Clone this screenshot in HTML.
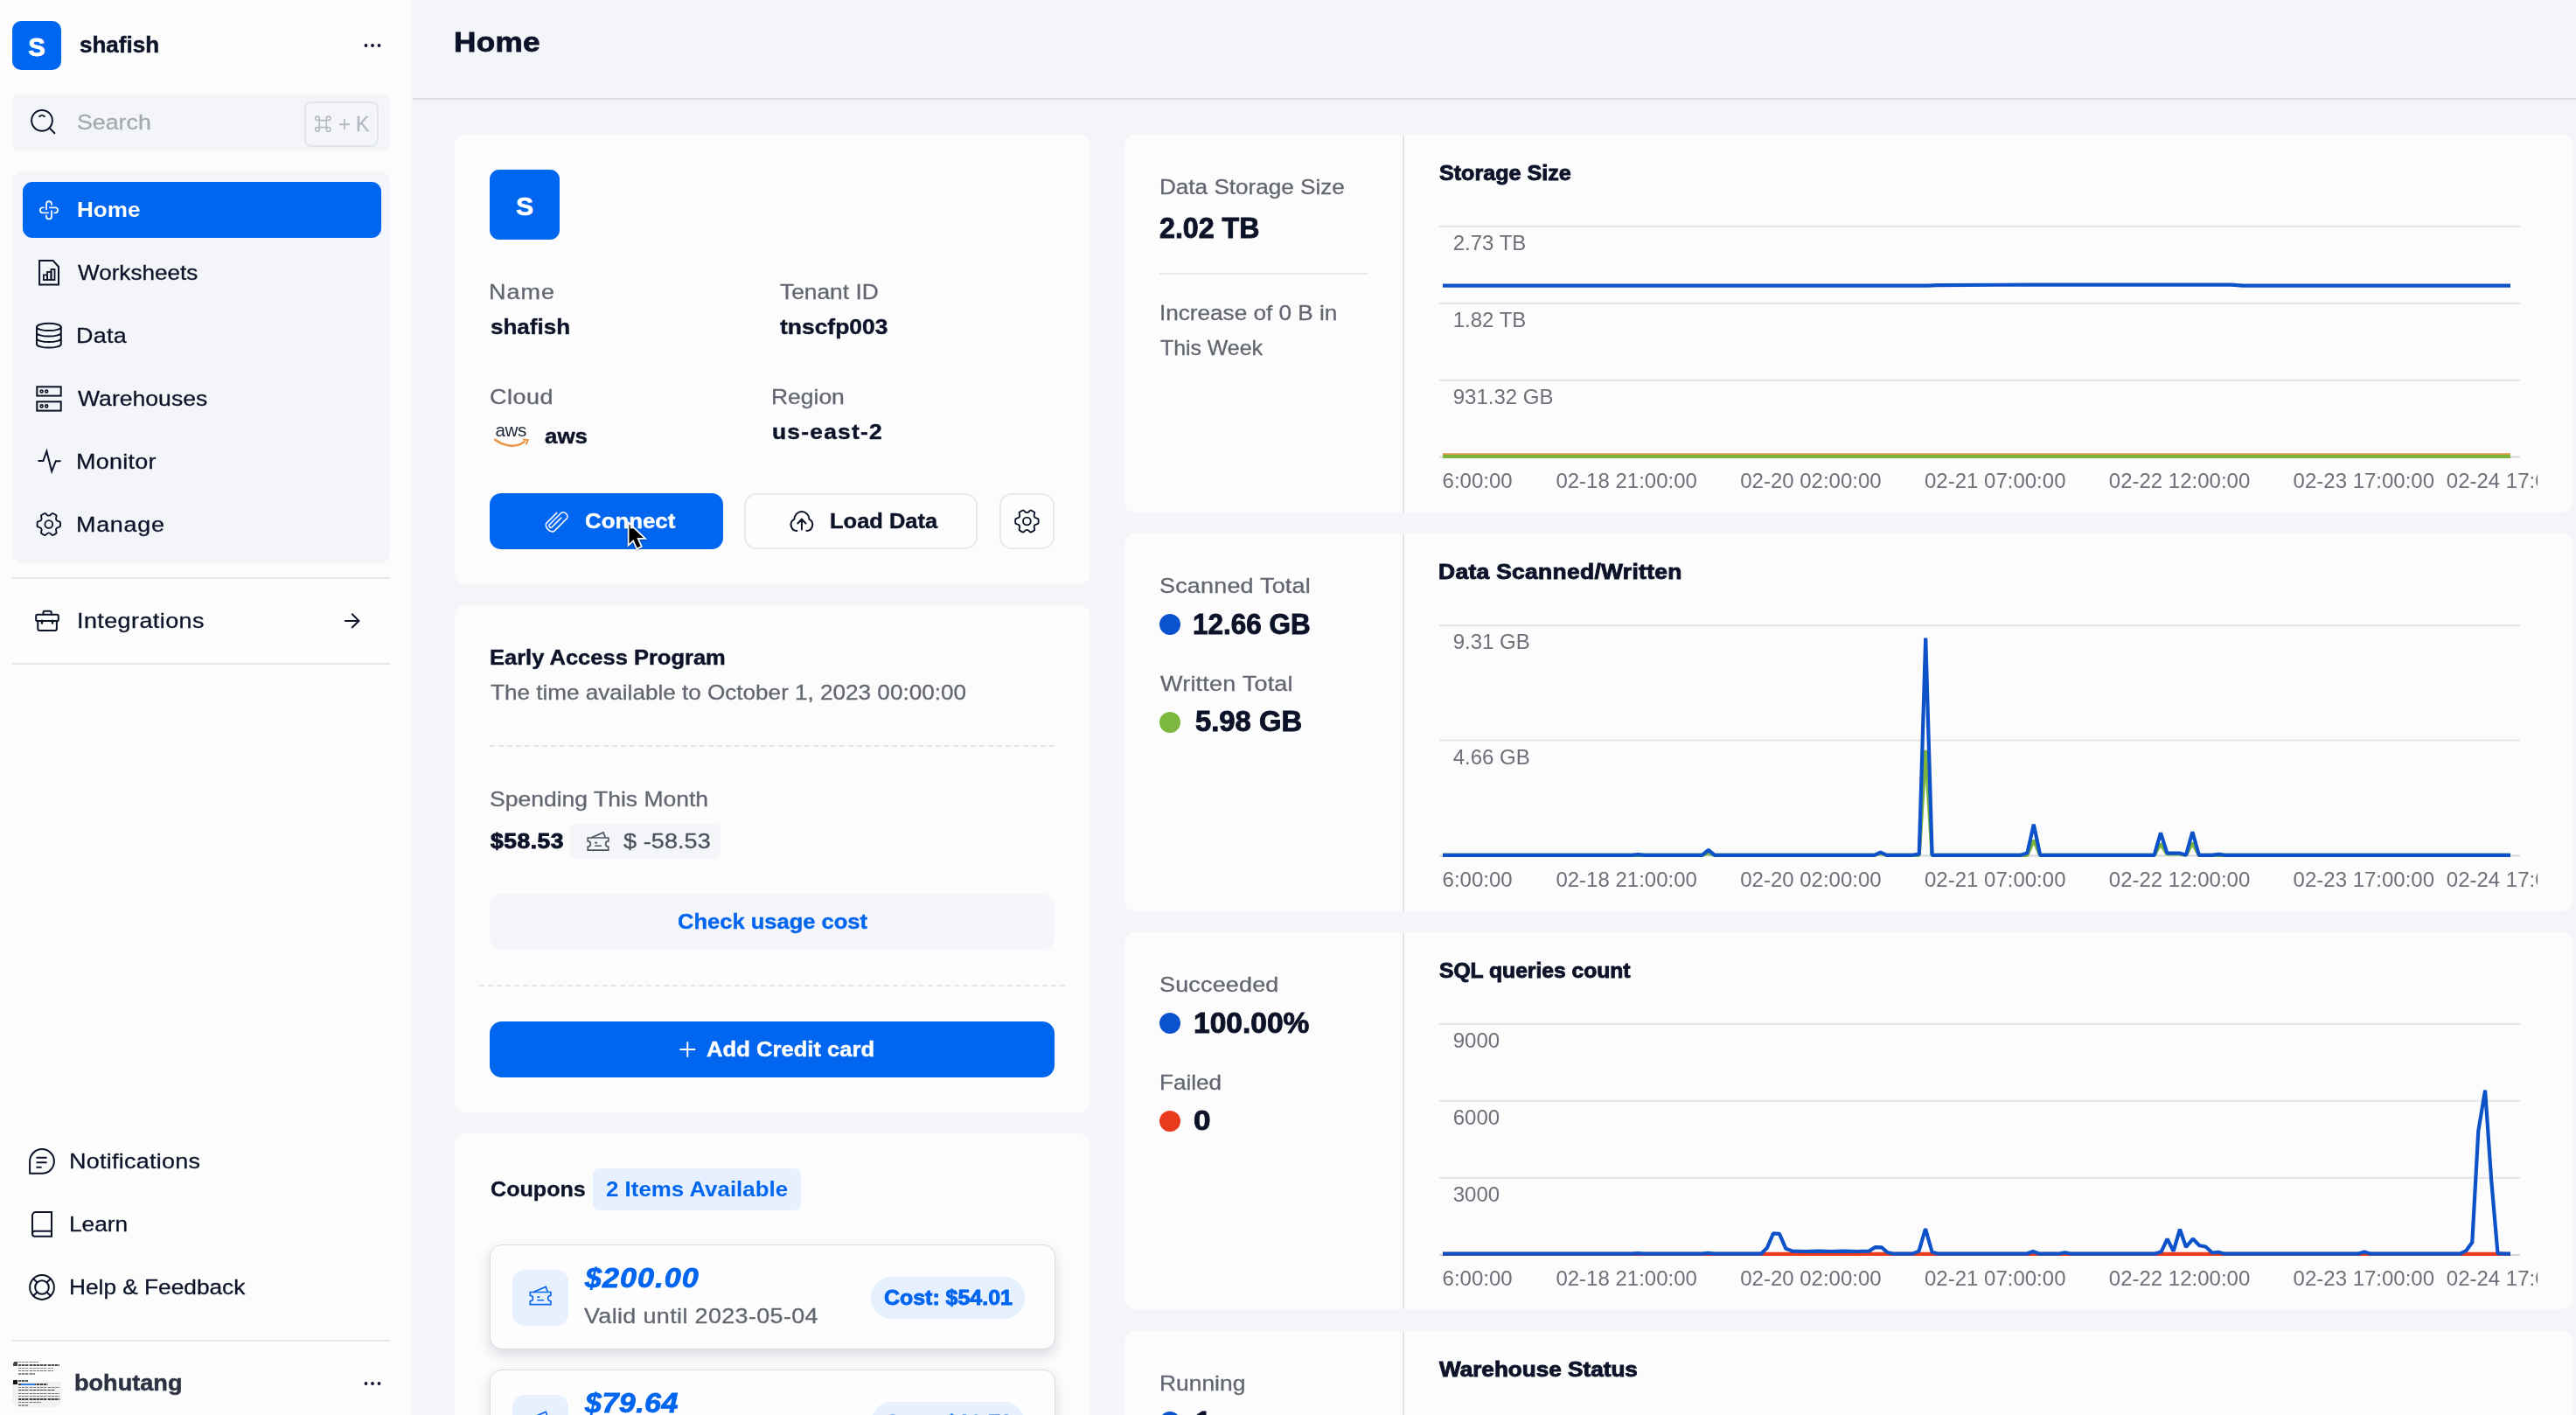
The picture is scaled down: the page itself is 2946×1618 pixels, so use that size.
<!DOCTYPE html>
<html><head><meta charset="utf-8"><title>Home</title>
<style>
html,body{margin:0;padding:0;}
body{width:2946px;height:1618px;overflow:hidden;position:relative;background:#f3f5f9;font-family:"Liberation Sans",sans-serif;}
.a{position:absolute;}
.t{position:absolute;white-space:pre;transform-origin:0 0;}
.card{position:absolute;background:#fcfcfd;border-radius:12px;}
.blue{background:#0065ef;}
svg{position:absolute;overflow:visible;}
</style></head><body>
<!-- sidebar -->
<div class="a" style="left:0;top:0;width:470px;height:1618px;background:#fcfcfd"></div>
<div class="a blue" style="left:14px;top:24px;width:56px;height:56px;border-radius:10px"></div>
<div class="t" style="left:14px;top:24px;width:56px;height:56px;line-height:61px;text-align:center;color:#fff;font-weight:700;font-size:29px;-webkit-text-stroke:0.8px #fff">S</div>
<div class="a" style="left:14px;top:108px;width:432px;height:64px;border-radius:8px;background:#f3f5f9"></div>
<div class="a" style="left:348px;top:115.5px;width:85.3px;height:52px;border-radius:8px;border:2px solid #e3e6ea;box-sizing:border-box"></div>
<div class="a" style="left:14px;top:196px;width:432px;height:448px;border-radius:12px;background:#f3f5f9"></div>
<div class="a blue" style="left:26px;top:208px;width:410px;height:64px;border-radius:11px"></div>
<div class="a" style="left:14px;top:660px;width:432px;height:2px;background:#e6e7eb"></div>
<div class="a" style="left:14px;top:758px;width:432px;height:2px;background:#e6e7eb"></div>
<div class="a" style="left:14px;top:1532px;width:432px;height:2px;background:#e6e7eb"></div>
<!-- header -->
<div class="a" style="left:472px;top:112px;width:2474px;height:2px;background:#dadde2"></div>
<!-- cards left -->
<div class="card" style="left:520px;top:154px;width:726px;height:514px"></div>
<div class="a blue" style="left:560px;top:194px;width:80px;height:80px;border-radius:11px"></div>
<div class="t" style="left:560px;top:194px;width:80px;height:80px;line-height:83px;text-align:center;color:#fff;font-weight:700;font-size:30px;-webkit-text-stroke:0.6px #fff">S</div>
<div class="a blue" style="left:560px;top:564px;width:267px;height:64px;border-radius:13px"></div>
<div class="a" style="left:851.3px;top:564px;width:266.5px;height:64px;border-radius:14px;border:2px solid #e7e9ec;box-sizing:border-box;background:#fdfdfe"></div>
<div class="a" style="left:1142.6px;top:564px;width:63.5px;height:64px;border-radius:14px;border:2px solid #e7e9ec;box-sizing:border-box;background:#fdfdfe"></div>

<div class="card" style="left:520px;top:692px;width:726px;height:580px"></div>
<div class="a" style="left:560px;top:852px;width:646px;height:0;border-top:2px dashed #e3e5e9"></div>
<div class="a" style="left:652px;top:942px;width:172px;height:40px;border-radius:7px;background:#f3f5f9"></div>
<div class="a" style="left:560px;top:1022px;width:646px;height:64px;border-radius:14px;background:#f3f5f9"></div>
<div class="a" style="left:548px;top:1126px;width:670px;height:0;border-top:2px dashed #e3e5e9"></div>
<div class="a blue" style="left:560px;top:1168px;width:646px;height:64px;border-radius:14px"></div>

<div class="card" style="left:520px;top:1296px;width:726px;height:400px"></div>
<div class="a" style="left:678px;top:1336px;width:238px;height:48px;border-radius:7px;background:#e6f0fe"></div>
<div class="a" style="left:559.5px;top:1423px;width:647px;height:120px;border-radius:14px;border:1.5px solid #d9dce2;box-sizing:border-box;background:#fdfdfe;box-shadow:0 6px 14px rgba(20,30,60,.15)"></div>
<div class="a" style="left:586px;top:1452px;width:64px;height:64px;border-radius:14px;background:#e6f0fe"></div>
<div class="a" style="left:996px;top:1460px;width:176px;height:48px;border-radius:24px;background:#e6f0fe"></div>
<div class="a" style="left:559.5px;top:1566px;width:647px;height:120px;border-radius:14px;border:1.5px solid #d9dce2;box-sizing:border-box;background:#fdfdfe;box-shadow:0 6px 14px rgba(20,30,60,.15)"></div>
<div class="a" style="left:586px;top:1595px;width:64px;height:64px;border-radius:14px;background:#e6f0fe"></div>
<div class="a" style="left:996px;top:1603px;width:176px;height:48px;border-radius:24px;background:#e6f0fe"></div>

<!-- cards right -->
<div class="card" style="left:1286px;top:154px;width:1656px;height:432px"></div>
<div class="card" style="left:1286px;top:610px;width:1656px;height:431.7px"></div>
<div class="card" style="left:1286px;top:1065.8px;width:1656px;height:431.5px"></div>
<div class="card" style="left:1286px;top:1521.7px;width:1656px;height:200px"></div>
<div class="a" style="left:1604px;top:154px;width:2px;height:432px;background:#e4e5e8"></div>
<div class="a" style="left:1604px;top:610px;width:2px;height:431.7px;background:#e4e5e8"></div>
<div class="a" style="left:1604px;top:1065.8px;width:2px;height:431.5px;background:#e4e5e8"></div>
<div class="a" style="left:1604px;top:1521.7px;width:2px;height:100px;background:#e4e5e8"></div>
<div class="a" style="left:1326px;top:312px;width:238px;height:2px;background:#e6e8ec"></div>
<!-- dots -->
<div class="a" style="left:1326px;top:702px;width:24px;height:24px;border-radius:50%;background:#0b53ce"></div>
<div class="a" style="left:1326px;top:813.8px;width:24px;height:24px;border-radius:50%;background:#7cb83f"></div>
<div class="a" style="left:1326px;top:1157.7px;width:24px;height:24px;border-radius:50%;background:#0b53ce"></div>
<div class="a" style="left:1326px;top:1269.6px;width:24px;height:24px;border-radius:50%;background:#ea3a1e"></div>
<div class="a" style="left:1326px;top:1613.5px;width:24px;height:24px;border-radius:50%;background:#0b53ce"></div>
<div class="a" style="left:0;top:0;width:2946px;height:1618px;will-change:transform">
<svg width="2946" height="1618" viewBox="0 0 2946 1618" style="left:0;top:0" fill="none">
<line x1="1646" x2="2882" y1="259" y2="259" stroke="#e4e5e8" stroke-width="2"/>
<line x1="1646" x2="2882" y1="346.9" y2="346.9" stroke="#e4e5e8" stroke-width="2"/>
<line x1="1646" x2="2882" y1="434.7" y2="434.7" stroke="#e4e5e8" stroke-width="2"/>
<line x1="1646" x2="2882" y1="522.6" y2="522.6" stroke="#d3d5da" stroke-width="2"/>
<rect x="1650" y="518.2" width="1221" height="1.8" fill="#f0954b"/>
<rect x="1650" y="519.8" width="1221" height="4.2" fill="#7cb53e"/>
<polyline points="1650,326.6 2205,326.6 2215,326.1 2320,325.6 2552,325.6 2565,326.6 2871,326.6" stroke="#0d52c8" stroke-width="4.2" stroke-linejoin="round"/>
<line x1="1646" x2="2882" y1="715.2" y2="715.2" stroke="#e4e5e8" stroke-width="2"/>
<line x1="1646" x2="2882" y1="846.6" y2="846.6" stroke="#e4e5e8" stroke-width="2"/>
<line x1="1646" x2="2882" y1="978.6" y2="978.6" stroke="#d3d5da" stroke-width="2"/>
<polyline points="1650.0,977.8 1946.5,977.8 1953.8,975.5 1961.0,977.8 2143.5,977.8 2150.6,975.8 2157.8,977.8 2194.8,977.8 2202.2,858.0 2209.6,977.8 2318.4,977.8 2325.8,960.8 2333.2,977.8 2463.7,977.8 2471.0,965.0 2478.4,976.5 2492.5,976.5 2500.0,977.8 2507.4,964.0 2514.8,977.8 2871.0,977.8" stroke="#7cb53e" stroke-width="4.2" stroke-linejoin="bevel" stroke-linecap="butt"/>
<polyline points="1650.0,977.8 1866.0,977.8 1873.4,977.2 1880.8,977.8 1946.5,977.8 1953.8,972.0 1961.0,977.8 2143.5,977.8 2150.6,974.6 2157.8,977.8 2187.4,977.8 2194.8,976.6 2202.2,729.5 2209.6,977.8 2311.0,977.8 2318.4,975.6 2325.8,942.8 2333.2,977.8 2463.7,977.8 2471.0,952.3 2478.4,975.6 2492.5,975.6 2500.0,977.8 2507.4,951.3 2514.8,977.8 2529.6,977.8 2537.0,976.8 2544.4,977.8 2871.0,977.8" stroke="#0d52c8" stroke-width="4.2" stroke-linejoin="bevel" stroke-linecap="butt"/>
<line x1="1646" x2="2882" y1="1171" y2="1171" stroke="#e4e5e8" stroke-width="2"/>
<line x1="1646" x2="2882" y1="1258.8" y2="1258.8" stroke="#e4e5e8" stroke-width="2"/>
<line x1="1646" x2="2882" y1="1346.7" y2="1346.7" stroke="#e4e5e8" stroke-width="2"/>
<line x1="1646" x2="2882" y1="1435" y2="1435" stroke="#d3d5da" stroke-width="2"/>
<polyline points="1650.0,1433.9 2871.0,1433.9" stroke="#ee3a1d" stroke-width="4.2" stroke-linejoin="bevel" stroke-linecap="butt"/>
<polyline points="1650.0,1433.7 1866.0,1433.7 1873.4,1433.1 1880.8,1433.7 1946.0,1433.7 1953.5,1432.9 1961.0,1433.7 2014.0,1433.7 2021.0,1426.7 2028.0,1410.4 2035.0,1410.8 2042.4,1427.8 2050.0,1430.6 2064.8,1431.0 2079.6,1430.6 2094.4,1431.0 2109.0,1430.6 2123.8,1431.0 2137.4,1430.6 2144.4,1426.2 2151.9,1426.4 2158.4,1432.0 2165.8,1433.7 2187.4,1433.7 2194.5,1430.6 2202.0,1405.0 2209.6,1431.8 2216.8,1433.7 2317.5,1433.7 2325.0,1431.0 2332.4,1433.7 2354.0,1433.7 2361.4,1432.2 2368.8,1433.7 2464.5,1433.7 2471.7,1431.3 2478.6,1416.6 2485.6,1430.6 2493.0,1405.7 2500.0,1426.0 2507.8,1416.6 2515.4,1424.3 2522.4,1425.5 2530.0,1432.5 2537.0,1431.8 2544.4,1433.7 2696.5,1433.7 2703.9,1431.5 2711.3,1433.7 2813.5,1433.7 2820.5,1430.0 2827.3,1420.5 2834.3,1293.3 2842.1,1246.6 2849.1,1348.4 2856.5,1433.2 2863.8,1433.7 2871.0,1433.7" stroke="#0d52c8" stroke-width="4.2" stroke-linejoin="bevel" stroke-linecap="butt"/>
</svg>
<svg width="2946" height="1618" viewBox="0 0 2946 1618" style="left:0;top:0" fill="none" stroke-linecap="round" stroke-linejoin="round">
<circle cx="418.5" cy="52" r="1.9" fill="#0c1328"/>
<circle cx="426" cy="52" r="1.9" fill="#0c1328"/>
<circle cx="433.5" cy="52" r="1.9" fill="#0c1328"/>
<circle cx="418.5" cy="1582" r="1.9" fill="#0c1328"/>
<circle cx="426" cy="1582" r="1.9" fill="#0c1328"/>
<circle cx="433.5" cy="1582" r="1.9" fill="#0c1328"/>
<circle cx="48" cy="137.8" r="11.9" stroke="#0c1328" stroke-width="2"/><path d="M56.6,146.4 L62.4,152.2" stroke="#0c1328" stroke-width="2"/><path d="M45,133.2 Q48,130.6 51,133.2" stroke="#0c1328" stroke-width="1.8"/>
<g stroke="#b4b8c0" stroke-width="1.55" fill="none"><path d="M365.3,137.6 h8 v8 h-8 z"/><circle cx="363" cy="135.3" r="2.3"/><circle cx="375.6" cy="135.3" r="2.3"/><circle cx="363" cy="147.9" r="2.3"/><circle cx="375.6" cy="147.9" r="2.3"/></g>
<path d="M-3,-0.9 V-7.1 A3,3 0 0 1 3,-7.1 V-6.2" transform="translate(56,240.3) rotate(0)" stroke="#eef5ff" stroke-width="1.85"/>
<path d="M-3,-0.9 V-7.1 A3,3 0 0 1 3,-7.1 V-6.2" transform="translate(56,240.3) rotate(90)" stroke="#eef5ff" stroke-width="1.85"/>
<path d="M-3,-0.9 V-7.1 A3,3 0 0 1 3,-7.1 V-6.2" transform="translate(56,240.3) rotate(180)" stroke="#eef5ff" stroke-width="1.85"/>
<path d="M-3,-0.9 V-7.1 A3,3 0 0 1 3,-7.1 V-6.2" transform="translate(56,240.3) rotate(270)" stroke="#eef5ff" stroke-width="1.85"/>
<path d="M45.1,297.9 H60.6 L67,305 V325.5 H45.1 Z" stroke="#0c1328" stroke-width="2" stroke-linejoin="miter"/>
<g stroke="#0c1328" stroke-width="1.8" stroke-linejoin="miter"><rect x="49.9" y="314.4" width="4.2" height="5.6"/><rect x="54.1" y="311" width="4.4" height="9"/><rect x="58.5" y="308" width="4" height="12"/></g>
<ellipse cx="55.9" cy="373.9" rx="13.9" ry="4.2" stroke="#0c1328" stroke-width="2"/><path d="M42,373.9 V393.4 A13.9,4.2 0 0 0 69.8,393.4 V373.9 M42,380.4 A13.9,4.2 0 0 0 69.8,380.4 M42,386.9 A13.9,4.2 0 0 0 69.8,386.9" stroke="#0c1328" stroke-width="2"/>
<g stroke="#0c1328" stroke-width="2" stroke-linejoin="miter"><rect x="42.3" y="442.3" width="27.4" height="10.3"/><rect x="42.3" y="459.3" width="27.4" height="10.3"/></g>
<circle cx="47.6" cy="447.5" r="1.5" stroke="#0c1328" stroke-width="1.6"/>
<circle cx="53.2" cy="447.5" r="1.5" stroke="#0c1328" stroke-width="1.6"/>
<circle cx="47.6" cy="464.4" r="1.5" stroke="#0c1328" stroke-width="1.6"/>
<circle cx="53.2" cy="464.4" r="1.5" stroke="#0c1328" stroke-width="1.6"/>
<path d="M44.3,527.1 H49.4 L53.4,516 L59.2,539 L63.8,527.2 H68.8" stroke="#0c1328" stroke-width="2" stroke-linejoin="miter"/>
<path d="M68.83,596.85 A13.3,13.3 0 0 1 68.83,602.15 L67.11,602.85 Q62.90,603.60 64.36,607.62 L64.61,609.46 A13.3,13.3 0 0 1 60.02,612.11 L58.55,610.97 Q55.80,607.70 53.05,610.97 L51.58,612.11 A13.3,13.3 0 0 1 46.99,609.46 L47.24,607.62 Q48.70,603.60 44.49,602.85 L42.77,602.15 A13.3,13.3 0 0 1 42.77,596.85 L44.49,596.15 Q48.70,595.40 47.24,591.38 L46.99,589.54 A13.3,13.3 0 0 1 51.58,586.89 L53.05,588.03 Q55.80,591.30 58.55,588.03 L60.02,586.89 A13.3,13.3 0 0 1 64.61,589.54 L64.36,591.38 Q62.90,595.40 67.11,596.15 Z" stroke="#0c1328" stroke-width="1.85"/><circle cx="55.8" cy="599.5" r="4.4" stroke="#0c1328" stroke-width="1.85"/>
<rect x="41.2" y="702.7" width="25.6" height="7.4" rx="1.6" stroke="#0c1328" stroke-width="2"/><path d="M49.5,702.7 V700.2 A1.5,1.5 0 0 1 51,698.7 H57.2 A1.5,1.5 0 0 1 58.7,700.2 V702.7" stroke="#0c1328" stroke-width="2"/><path d="M43.3,710.1 V718.8 A2.2,2.2 0 0 0 45.5,721 H62.7 A2.2,2.2 0 0 0 64.9,718.8 V710.1" stroke="#0c1328" stroke-width="2"/><path d="M48,709.6 V712.6 M60,709.6 V712.6" stroke="#0c1328" stroke-width="2.4"/>
<path d="M394.2,709.9 H410 M402.3,701.8 L410.4,709.9 L402.3,718" stroke="#0c1328" stroke-width="2" stroke-linejoin="miter" stroke-linecap="butt"/>
<path d="M34.1,1341.8 V1328.1 A13.9,13.9 0 1 1 48,1341.8 Z" stroke="#0c1328" stroke-width="2" stroke-linejoin="miter"/><path d="M41.5,1323.7 H53.6 M41.5,1329.2 H53.6 M41.5,1334.8 H47.6" stroke="#0c1328" stroke-width="2" stroke-linecap="butt"/>
<path d="M59,1386.1 H41 A4,4 0 0 0 37,1390.1 V1410.8 A3,3 0 0 0 40,1413.8 H59 Z M37,1410.8 A3,3 0 0 1 40,1407.8 H59" stroke="#0c1328" stroke-width="2" stroke-linejoin="miter"/>
<circle cx="48" cy="1472" r="13.9" stroke="#0c1328" stroke-width="2"/><circle cx="48" cy="1472" r="7.8" stroke="#0c1328" stroke-width="2"/><path d="M38.2,1462.2 L42.5,1466.5 M57.8,1462.2 L53.5,1466.5 M38.2,1481.8 L42.5,1477.5 M57.8,1481.8 L53.5,1477.5" stroke="#0c1328" stroke-width="2"/>
<g transform="translate(636.8,596.4) rotate(-45)" stroke="#f2f7ff" stroke-width="1.6"><path d="M7.1,-7.1 H-9.5 A4,6.35 0 0 0 -9.5,5.6 H10.5 A3.6,4.53 0 0 0 10.5,-3.45 H-8.6 A1.8,1.98 0 0 0 -8.6,0.5 H6.6"/></g>
<path d="M908.4,593.6 A8.5,8.5 0 0 1 925.4,593.6 M908.4,593.6 A7.1,7.1 0 0 0 911.4,607 M925.4,593.6 A7.1,7.1 0 0 1 922.4,607 M916.9,605.4 V594 M912.3,598.5 L916.9,593.8 L921.5,598.5" stroke="#0c1328" stroke-width="2" stroke-linejoin="miter"/>
<path d="M1187.43,593.35 A13.3,13.3 0 0 1 1187.43,598.65 L1185.71,599.35 Q1181.50,600.10 1182.96,604.12 L1183.21,605.96 A13.3,13.3 0 0 1 1178.62,608.61 L1177.15,607.47 Q1174.40,604.20 1171.65,607.47 L1170.18,608.61 A13.3,13.3 0 0 1 1165.59,605.96 L1165.84,604.12 Q1167.30,600.10 1163.09,599.35 L1161.37,598.65 A13.3,13.3 0 0 1 1161.37,593.35 L1163.09,592.65 Q1167.30,591.90 1165.84,587.88 L1165.59,586.04 A13.3,13.3 0 0 1 1170.18,583.39 L1171.65,584.53 Q1174.40,587.80 1177.15,584.53 L1178.62,583.39 A13.3,13.3 0 0 1 1183.21,586.04 L1182.96,587.88 Q1181.50,591.90 1185.71,592.65 Z" stroke="#0c1328" stroke-width="1.85"/><circle cx="1174.4" cy="596" r="4.4" stroke="#0c1328" stroke-width="1.85"/>
<path d="M566.2,502.8 Q585,515.5 599.6,505.2" stroke="#e8974a" stroke-width="2.6"/><path d="M598.6,502.6 L604,503.2 L601.8,507.6" stroke="#e8974a" stroke-width="2"/>
<g transform="translate(605.4,1476.6)" stroke="#0e68ef" stroke-width="1.65" stroke-linejoin="miter" stroke-linecap="butt"><path d="M0.9,0.9 H24.5 V4.8 A3.2,3.2 0 0 0 24.5,11.2 V15 H0.9 V11.2 A3.2,3.2 0 0 0 0.9,4.8 Z"/><path d="M5,0.6 L18.8,-5.2 L21,0.6"/><path d="M8.9,6.6 H11.8 M8.9,10.2 H16.6"/></g>
<g transform="translate(605.4,1619.6)" stroke="#0e68ef" stroke-width="1.65" stroke-linejoin="miter" stroke-linecap="butt"><path d="M0.9,0.9 H24.5 V4.8 A3.2,3.2 0 0 0 24.5,11.2 V15 H0.9 V11.2 A3.2,3.2 0 0 0 0.9,4.8 Z"/><path d="M5,0.6 L18.8,-5.2 L21,0.6"/><path d="M8.9,6.6 H11.8 M8.9,10.2 H16.6"/></g>
<g transform="translate(671.3,957.1)" stroke="#4e535f" stroke-width="1.65" stroke-linejoin="miter" stroke-linecap="butt"><path d="M0.9,0.9 H24.5 V4.8 A3.2,3.2 0 0 0 24.5,11.2 V15 H0.9 V11.2 A3.2,3.2 0 0 0 0.9,4.8 Z"/><path d="M5,0.6 L18.8,-5.2 L21,0.6"/><path d="M8.9,6.6 H11.8 M8.9,10.2 H16.6"/></g>
<path d="M777.4,1200 H795.2 M786.3,1191.2 V1208.8" stroke="#fff" stroke-width="1.9" stroke-linecap="butt"/>
<path d="M718.6,597.3 V623.6 L724.2,618.4 L728.3,627.6 L733.8,625.1 L729.7,615.9 L738,615.9 Z" fill="#000" stroke="#fff" stroke-width="1.7" stroke-linejoin="miter" style="filter:drop-shadow(0.5px 1.5px 1.2px rgba(0,0,0,.35))"/>
</svg>
<div class="t" style="left:566.6px;top:478.6px;font-size:20.5px;line-height:26px;color:#1c2333;letter-spacing:-0.4px">aws</div>
<div class="a" style="left:14px;top:1554px;width:56px;height:55px;border-radius:9px;background:#fdfdfd;overflow:hidden">
<div class="a" style="left:0;top:26px;width:56px;height:29px;background:#f1f1f2"></div>
<div class="a" style="left:0.5px;top:2.5px;width:5.5px;height:5.5px;background:#444"></div>
<div class="a" style="left:0.5px;top:24px;width:5.5px;height:5px;background:#111"></div>
<div class="a" style="left:7px;top:2.6px;width:23px;height:1.7px;background:repeating-linear-gradient(90deg,rgba(20,20,25,0.55) 0 3px,rgba(20,20,25,0.19) 3px 4.2px)"></div>
<div class="a" style="left:7px;top:6.0px;width:47px;height:1.7px;background:repeating-linear-gradient(90deg,rgba(20,20,25,0.75) 0 3px,rgba(20,20,25,0.26) 3px 4.2px)"></div>
<div class="a" style="left:7px;top:9.5px;width:40px;height:1.7px;background:repeating-linear-gradient(90deg,rgba(20,20,25,0.5) 0 3px,rgba(20,20,25,0.17) 3px 4.2px)"></div>
<div class="a" style="left:7px;top:12.7px;width:40px;height:1.7px;background:repeating-linear-gradient(90deg,rgba(20,20,25,0.6) 0 3px,rgba(20,20,25,0.21) 3px 4.2px)"></div>
<div class="a" style="left:7px;top:16.2px;width:19px;height:1.7px;background:repeating-linear-gradient(90deg,rgba(20,20,25,0.5) 0 3px,rgba(20,20,25,0.17) 3px 4.2px)"></div>
<div class="a" style="left:7px;top:24.4px;width:11px;height:1.7px;background:repeating-linear-gradient(90deg,rgba(20,20,25,0.7) 0 3px,rgba(20,20,25,0.24) 3px 4.2px)"></div>
<div class="a" style="left:7px;top:28.1px;width:34px;height:1.7px;background:repeating-linear-gradient(90deg,rgba(20,20,25,0.8) 0 3px,rgba(20,20,25,0.28) 3px 4.2px)"></div>
<div class="a" style="left:7px;top:31.5px;width:47px;height:1.7px;background:repeating-linear-gradient(90deg,rgba(20,20,25,0.5) 0 3px,rgba(20,20,25,0.17) 3px 4.2px)"></div>
<div class="a" style="left:7px;top:34.8px;width:42px;height:1.7px;background:repeating-linear-gradient(90deg,rgba(20,20,25,0.85) 0 3px,rgba(20,20,25,0.30) 3px 4.2px)"></div>
<div class="a" style="left:7px;top:38.5px;width:47px;height:1.7px;background:repeating-linear-gradient(90deg,rgba(20,20,25,0.55) 0 3px,rgba(20,20,25,0.19) 3px 4.2px)"></div>
<div class="a" style="left:7px;top:41.7px;width:47px;height:1.7px;background:repeating-linear-gradient(90deg,rgba(20,20,25,0.55) 0 3px,rgba(20,20,25,0.19) 3px 4.2px)"></div>
<div class="a" style="left:7px;top:45.2px;width:47px;height:1.7px;background:repeating-linear-gradient(90deg,rgba(20,20,25,0.8) 0 3px,rgba(20,20,25,0.28) 3px 4.2px)"></div>
<div class="a" style="left:7px;top:48.6px;width:26px;height:1.7px;background:repeating-linear-gradient(90deg,rgba(20,20,25,0.55) 0 3px,rgba(20,20,25,0.19) 3px 4.2px)"></div>
<div class="a" style="left:7px;top:52.1px;width:11px;height:1.7px;background:repeating-linear-gradient(90deg,rgba(20,20,25,0.4) 0 3px,rgba(20,20,25,0.14) 3px 4.2px)"></div>
<div class="a" style="left:10px;top:28px;width:16px;height:1.8px;background:#2a7be4"></div>
</div>
<div class="t" style="left:90.7px;top:36.0px;font-size:25px;line-height:31px;color:#0c1328;font-weight:700;transform:scaleX(1.0400);-webkit-text-stroke:0.5px #0c1328;">shafish</div>
<div class="t" style="left:87.6px;top:124.0px;font-size:24.5px;line-height:31px;color:#a4a8b1;transform:scaleX(1.0921);-webkit-text-stroke:0.3px #a4a8b1;">Search</div>
<div class="t" style="left:387.3px;top:127.8px;font-size:23px;line-height:29px;color:#b4b8c0;-webkit-text-stroke:0.3px #b4b8c0;">+ K</div>
<div class="t" style="left:87.9px;top:225.0px;font-size:24px;line-height:30px;color:#ffffff;font-weight:700;transform:scaleX(1.0868);">Home</div>
<div class="t" style="left:89.0px;top:295.5px;font-size:24.5px;line-height:31px;color:#0c1328;transform:scaleX(1.0649);-webkit-text-stroke:0.3px #0c1328;">Worksheets</div>
<div class="t" style="left:86.8px;top:367.5px;font-size:24.5px;line-height:31px;color:#0c1328;letter-spacing:0.26px;transform:scaleX(1.1000);-webkit-text-stroke:0.3px #0c1328;">Data</div>
<div class="t" style="left:89.0px;top:439.5px;font-size:24.5px;line-height:31px;color:#0c1328;transform:scaleX(1.0852);-webkit-text-stroke:0.3px #0c1328;">Warehouses</div>
<div class="t" style="left:86.8px;top:512.3px;font-size:24.5px;line-height:31px;color:#0c1328;letter-spacing:0.23px;transform:scaleX(1.1000);-webkit-text-stroke:0.3px #0c1328;">Monitor</div>
<div class="t" style="left:86.8px;top:584.0px;font-size:24.5px;line-height:31px;color:#0c1328;letter-spacing:0.64px;transform:scaleX(1.1000);-webkit-text-stroke:0.3px #0c1328;">Manage</div>
<div class="t" style="left:87.8px;top:693.5px;font-size:24.5px;line-height:31px;color:#0c1328;letter-spacing:0.38px;transform:scaleX(1.1000);-webkit-text-stroke:0.3px #0c1328;">Integrations</div>
<div class="t" style="left:78.5px;top:1311.5px;font-size:24.5px;line-height:31px;color:#0c1328;letter-spacing:0.25px;transform:scaleX(1.1000);-webkit-text-stroke:0.3px #0c1328;">Notifications</div>
<div class="t" style="left:78.6px;top:1383.6px;font-size:24.5px;line-height:31px;color:#0c1328;transform:scaleX(1.0710);-webkit-text-stroke:0.3px #0c1328;">Learn</div>
<div class="t" style="left:78.6px;top:1455.5px;font-size:24.5px;line-height:31px;color:#0c1328;transform:scaleX(1.0713);-webkit-text-stroke:0.3px #0c1328;">Help &amp; Feedback</div>
<div class="t" style="left:85.4px;top:1566.3px;font-size:25px;line-height:31px;color:#2c3242;font-weight:700;transform:scaleX(1.0844);-webkit-text-stroke:0.5px #2c3242;">bohutang</div>
<div class="t" style="left:519.4px;top:28.0px;font-size:32px;line-height:40px;color:#0c1328;font-weight:700;letter-spacing:0.21px;transform:scaleX(1.1000);-webkit-text-stroke:0.8px #0c1328;">Home</div>
<div class="t" style="left:558.5px;top:317.5px;font-size:24.5px;line-height:31px;color:#61666f;letter-spacing:0.91px;transform:scaleX(1.1000);-webkit-text-stroke:0.3px #61666f;">Name</div>
<div class="t" style="left:560.7px;top:359.0px;font-size:24px;line-height:30px;color:#0c1328;font-weight:700;transform:scaleX(1.0844);-webkit-text-stroke:0.4px #0c1328;">shafish</div>
<div class="t" style="left:892.1px;top:317.5px;font-size:24.5px;line-height:31px;color:#61666f;transform:scaleX(1.0751);-webkit-text-stroke:0.3px #61666f;">Tenant ID</div>
<div class="t" style="left:892.1px;top:359.0px;font-size:24px;line-height:30px;color:#0c1328;font-weight:700;letter-spacing:0.02px;transform:scaleX(1.1000);-webkit-text-stroke:0.4px #0c1328;">tnscfp003</div>
<div class="t" style="left:559.6px;top:438.4px;font-size:24.5px;line-height:31px;color:#61666f;letter-spacing:0.45px;transform:scaleX(1.1000);-webkit-text-stroke:0.3px #61666f;">Cloud</div>
<div class="t" style="left:623.4px;top:483.7px;font-size:24px;line-height:30px;color:#0c1328;font-weight:700;transform:scaleX(1.0796);-webkit-text-stroke:0.4px #0c1328;">aws</div>
<div class="t" style="left:882.0px;top:438.4px;font-size:24.5px;line-height:31px;color:#61666f;transform:scaleX(1.0798);-webkit-text-stroke:0.3px #61666f;">Region</div>
<div class="t" style="left:883.1px;top:479.0px;font-size:24px;line-height:30px;color:#0c1328;font-weight:700;letter-spacing:1.11px;transform:scaleX(1.1000);-webkit-text-stroke:0.4px #0c1328;">us-east-2</div>
<div class="t" style="left:668.9px;top:581.0px;font-size:24px;line-height:30px;color:#ffffff;font-weight:700;transform:scaleX(1.0760);-webkit-text-stroke:0.4px #ffffff;">Connect</div>
<div class="t" style="left:948.6px;top:581.0px;font-size:24px;line-height:30px;color:#0c1328;font-weight:700;transform:scaleX(1.0617);-webkit-text-stroke:0.4px #0c1328;">Load Data</div>
<div class="t" style="left:560.0px;top:736.6px;font-size:24px;line-height:30px;color:#0c1328;font-weight:700;transform:scaleX(1.0623);-webkit-text-stroke:0.4px #0c1328;">Early Access Program</div>
<div class="t" style="left:561.1px;top:775.7px;font-size:24.5px;line-height:31px;color:#61666f;transform:scaleX(1.0650);-webkit-text-stroke:0.3px #61666f;">The time available to October 1, 2023 00:00:00</div>
<div class="t" style="left:559.6px;top:897.8px;font-size:24.5px;line-height:31px;color:#61666f;transform:scaleX(1.0822);-webkit-text-stroke:0.3px #61666f;">Spending This Month</div>
<div class="t" style="left:560.7px;top:947.0px;font-size:24px;line-height:30px;color:#0c1328;font-weight:700;letter-spacing:0.48px;transform:scaleX(1.1000);-webkit-text-stroke:0.9px #0c1328;">$58.53</div>
<div class="t" style="left:712.7px;top:945.8px;font-size:24.5px;line-height:31px;color:#4b505d;letter-spacing:0.10px;transform:scaleX(1.1000);-webkit-text-stroke:0.3px #4b505d;">$ -58.53</div>
<div class="t" style="left:775.4px;top:1038.6px;font-size:24px;line-height:30px;color:#0065ef;font-weight:700;transform:scaleX(1.0633);-webkit-text-stroke:0.4px #0065ef;">Check usage cost</div>
<div class="t" style="left:808.2px;top:1184.8px;font-size:24px;line-height:30px;color:#ffffff;font-weight:700;transform:scaleX(1.0677);-webkit-text-stroke:0.4px #ffffff;">Add Credit card</div>
<div class="t" style="left:561.3px;top:1344.8px;font-size:24px;line-height:30px;color:#0c1328;font-weight:700;transform:scaleX(1.0460);-webkit-text-stroke:0.3px #0c1328;">Coupons</div>
<div class="t" style="left:693.3px;top:1344.8px;font-size:24px;line-height:30px;color:#0065ef;font-weight:700;transform:scaleX(1.0779);">2 Items Available</div>
<div class="t" style="left:668.6px;top:1442.3px;font-size:31px;line-height:39px;color:#0065ef;font-weight:700;font-style:italic;letter-spacing:0.97px;transform:scaleX(1.1000);-webkit-text-stroke:0.8px #0065ef;">$200.00</div>
<div class="t" style="left:667.5px;top:1489.0px;font-size:24.5px;line-height:31px;color:#61666f;letter-spacing:0.32px;transform:scaleX(1.1000);-webkit-text-stroke:0.3px #61666f;">Valid until 2023-05-04</div>
<div class="t" style="left:1011.2px;top:1469.0px;font-size:24px;line-height:30px;color:#0065ef;font-weight:700;transform:scaleX(1.0386);-webkit-text-stroke:0.9px #0065ef;">Cost: $54.01</div>
<div class="t" style="left:668.6px;top:1584.6px;font-size:31px;line-height:39px;color:#0065ef;font-weight:700;font-style:italic;letter-spacing:0.38px;transform:scaleX(1.1000);-webkit-text-stroke:0.8px #0065ef;">$79.64</div>
<div class="t" style="left:1011.2px;top:1612.0px;font-size:24px;line-height:30px;color:#0065ef;font-weight:700;transform:scaleX(1.0386);-webkit-text-stroke:0.9px #0065ef;">Cost: $19.73</div>
<div class="t" style="left:1325.7px;top:197.6px;font-size:24.5px;line-height:31px;color:#61666f;transform:scaleX(1.0652);-webkit-text-stroke:0.3px #61666f;">Data Storage Size</div>
<div class="t" style="left:1326.0px;top:241.0px;font-size:32.5px;line-height:41px;color:#0c1328;font-weight:700;transform:scaleX(0.9900);-webkit-text-stroke:0.9px #0c1328;">2.02 TB</div>
<div class="t" style="left:1325.7px;top:342.4px;font-size:24.5px;line-height:31px;color:#61666f;transform:scaleX(1.0663);-webkit-text-stroke:0.3px #61666f;">Increase of 0 B in</div>
<div class="t" style="left:1326.7px;top:381.8px;font-size:24.5px;line-height:31px;color:#61666f;transform:scaleX(1.0144);-webkit-text-stroke:0.3px #61666f;">This Week</div>
<div class="t" style="left:1646.0px;top:183.0px;font-size:24px;line-height:30px;color:#0c1328;font-weight:700;transform:scaleX(1.0459);-webkit-text-stroke:0.9px #0c1328;">Storage Size</div>
<div class="t" style="left:1326.1px;top:654.0px;font-size:24.5px;line-height:31px;color:#61666f;letter-spacing:0.18px;transform:scaleX(1.1000);-webkit-text-stroke:0.3px #61666f;">Scanned Total</div>
<div class="t" style="left:1364.4px;top:694.0px;font-size:32.5px;line-height:41px;color:#0c1328;font-weight:700;transform:scaleX(0.9688);-webkit-text-stroke:0.9px #0c1328;">12.66 GB</div>
<div class="t" style="left:1326.5px;top:766.0px;font-size:24.5px;line-height:31px;color:#61666f;letter-spacing:0.21px;transform:scaleX(1.1000);-webkit-text-stroke:0.3px #61666f;">Written Total</div>
<div class="t" style="left:1366.6px;top:805.4px;font-size:32.5px;line-height:41px;color:#0c1328;font-weight:700;transform:scaleX(1.0096);-webkit-text-stroke:0.9px #0c1328;">5.98 GB</div>
<div class="t" style="left:1644.9px;top:639.0px;font-size:24px;line-height:30px;color:#0c1328;font-weight:700;letter-spacing:0.29px;transform:scaleX(1.1000);-webkit-text-stroke:0.9px #0c1328;">Data Scanned/Written</div>
<div class="t" style="left:1326.2px;top:1110.2px;font-size:24.5px;line-height:31px;color:#61666f;letter-spacing:0.17px;transform:scaleX(1.1000);-webkit-text-stroke:0.3px #61666f;">Succeeded</div>
<div class="t" style="left:1364.8px;top:1149.9px;font-size:32.5px;line-height:41px;color:#0c1328;font-weight:700;transform:scaleX(1.0316);-webkit-text-stroke:0.9px #0c1328;">100.00%</div>
<div class="t" style="left:1325.9px;top:1222.0px;font-size:24.5px;line-height:31px;color:#61666f;transform:scaleX(1.0639);-webkit-text-stroke:0.3px #61666f;">Failed</div>
<div class="t" style="left:1365.2px;top:1261.0px;font-size:32px;line-height:40px;color:#0c1328;font-weight:700;letter-spacing:1.73px;transform:scaleX(1.1000);-webkit-text-stroke:0.9px #0c1328;">0</div>
<div class="t" style="left:1646.0px;top:1094.5px;font-size:24px;line-height:30px;color:#0c1328;font-weight:700;transform:scaleX(1.0264);-webkit-text-stroke:0.9px #0c1328;">SQL queries count</div>
<div class="t" style="left:1325.8px;top:1566.0px;font-size:24.5px;line-height:31px;color:#61666f;transform:scaleX(1.0774);-webkit-text-stroke:0.3px #61666f;">Running</div>
<div class="t" style="left:1646.0px;top:1550.8px;font-size:24px;line-height:30px;color:#0c1328;font-weight:700;transform:scaleX(1.0882);-webkit-text-stroke:0.9px #0c1328;">Warehouse Status</div>
<div class="t" style="left:1367.0px;top:1605.8px;font-size:32.5px;line-height:41px;color:#0c1328;font-weight:700;-webkit-text-stroke:0.9px #0c1328;">1</div>
<div class="t" style="left:1661.7px;top:263.4px;font-size:24px;line-height:30px;color:#6e7079;">2.73 TB</div>
<div class="t" style="left:1661.7px;top:351.3px;font-size:24px;line-height:30px;color:#6e7079;">1.82 TB</div>
<div class="t" style="left:1661.7px;top:439.2px;font-size:24px;line-height:30px;color:#6e7079;">931.32 GB</div>
<div class="t" style="left:1779.4px;top:534.7px;font-size:24px;line-height:30px;color:#6e7079;">02-18 21:00:00</div>
<div class="t" style="left:1990.2px;top:534.7px;font-size:24px;line-height:30px;color:#6e7079;">02-20 02:00:00</div>
<div class="t" style="left:2201.0px;top:534.7px;font-size:24px;line-height:30px;color:#6e7079;">02-21 07:00:00</div>
<div class="t" style="left:2411.8px;top:534.7px;font-size:24px;line-height:30px;color:#6e7079;">02-22 12:00:00</div>
<div class="t" style="left:2622.6px;top:534.7px;font-size:24px;line-height:30px;color:#6e7079;">02-23 17:00:00</div>
<div class="a" style="left:1650px;top:0;width:100px;height:1618px;overflow:hidden"><div class="a" style="left:-1650px;top:0"><div class="t" style="left:1568.2px;top:534.7px;font-size:24px;line-height:30px;color:#6e7079;">02-17 16:00:00</div></div></div>
<div class="a" style="left:2790px;top:0;width:111.5px;height:1618px;overflow:hidden"><div class="a" style="left:-2790px;top:0"><div class="t" style="left:2797.8px;top:534.7px;font-size:24px;line-height:30px;color:#6e7079;">02-24 17:00:00</div></div></div>
<div class="t" style="left:1661.7px;top:718.8px;font-size:24px;line-height:30px;color:#6e7079;">9.31 GB</div>
<div class="t" style="left:1661.7px;top:851.0px;font-size:24px;line-height:30px;color:#6e7079;">4.66 GB</div>
<div class="t" style="left:1779.4px;top:990.8px;font-size:24px;line-height:30px;color:#6e7079;">02-18 21:00:00</div>
<div class="t" style="left:1990.2px;top:990.8px;font-size:24px;line-height:30px;color:#6e7079;">02-20 02:00:00</div>
<div class="t" style="left:2201.0px;top:990.8px;font-size:24px;line-height:30px;color:#6e7079;">02-21 07:00:00</div>
<div class="t" style="left:2411.8px;top:990.8px;font-size:24px;line-height:30px;color:#6e7079;">02-22 12:00:00</div>
<div class="t" style="left:2622.6px;top:990.8px;font-size:24px;line-height:30px;color:#6e7079;">02-23 17:00:00</div>
<div class="a" style="left:1650px;top:0;width:100px;height:1618px;overflow:hidden"><div class="a" style="left:-1650px;top:0"><div class="t" style="left:1568.2px;top:990.8px;font-size:24px;line-height:30px;color:#6e7079;">02-17 16:00:00</div></div></div>
<div class="a" style="left:2790px;top:0;width:111.5px;height:1618px;overflow:hidden"><div class="a" style="left:-2790px;top:0"><div class="t" style="left:2797.8px;top:990.8px;font-size:24px;line-height:30px;color:#6e7079;">02-24 17:00:00</div></div></div>
<div class="t" style="left:1661.7px;top:1175.3px;font-size:24px;line-height:30px;color:#6e7079;">9000</div>
<div class="t" style="left:1661.7px;top:1263.0px;font-size:24px;line-height:30px;color:#6e7079;">6000</div>
<div class="t" style="left:1661.7px;top:1351.0px;font-size:24px;line-height:30px;color:#6e7079;">3000</div>
<div class="t" style="left:1779.4px;top:1446.6px;font-size:24px;line-height:30px;color:#6e7079;">02-18 21:00:00</div>
<div class="t" style="left:1990.2px;top:1446.6px;font-size:24px;line-height:30px;color:#6e7079;">02-20 02:00:00</div>
<div class="t" style="left:2201.0px;top:1446.6px;font-size:24px;line-height:30px;color:#6e7079;">02-21 07:00:00</div>
<div class="t" style="left:2411.8px;top:1446.6px;font-size:24px;line-height:30px;color:#6e7079;">02-22 12:00:00</div>
<div class="t" style="left:2622.6px;top:1446.6px;font-size:24px;line-height:30px;color:#6e7079;">02-23 17:00:00</div>
<div class="a" style="left:1650px;top:0;width:100px;height:1618px;overflow:hidden"><div class="a" style="left:-1650px;top:0"><div class="t" style="left:1568.2px;top:1446.6px;font-size:24px;line-height:30px;color:#6e7079;">02-17 16:00:00</div></div></div>
<div class="a" style="left:2790px;top:0;width:111.5px;height:1618px;overflow:hidden"><div class="a" style="left:-2790px;top:0"><div class="t" style="left:2797.8px;top:1446.6px;font-size:24px;line-height:30px;color:#6e7079;">02-24 17:00:00</div></div></div>
</div>
</body></html>
